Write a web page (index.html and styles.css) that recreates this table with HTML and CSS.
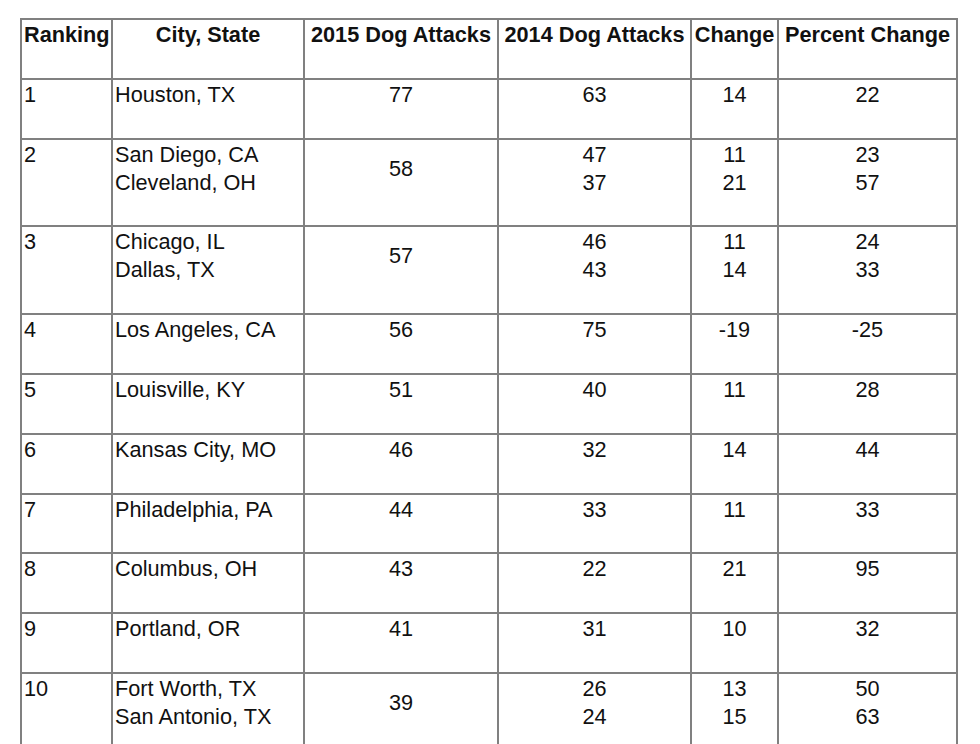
FILE: index.html
```html
<!DOCTYPE html>
<html lang="en">
<head>
<meta charset="utf-8">
<title>Dog Attacks by City</title>
<link rel="stylesheet" href="styles.css">
</head>
<body>
<table class="attacks">
  <colgroup>
    <col class="c-rank">
    <col class="c-city">
    <col class="c-2015">
    <col class="c-2014">
    <col class="c-change">
    <col class="c-pct">
  </colgroup>
  <thead>
    <tr>
      <th class="rank">Ranking</th>
      <th>City, State</th>
      <th>2015 Dog Attacks</th>
      <th>2014 Dog Attacks</th>
      <th>Change</th>
      <th>Percent Change</th>
    </tr>
  </thead>
  <tbody>
    <tr>
      <td class="rank">1</td>
      <td class="city">Houston, TX</td>
      <td>77</td>
      <td>63</td>
      <td>14</td>
      <td>22</td>
    </tr>
    <tr>
      <td class="rank">2</td>
      <td class="city">San Diego, CA<br>Cleveland, OH</td>
      <td>58</td>
      <td>47<br>37</td>
      <td>11<br>21</td>
      <td>23<br>57</td>
    </tr>
    <tr>
      <td class="rank">3</td>
      <td class="city">Chicago, IL<br>Dallas, TX</td>
      <td>57</td>
      <td>46<br>43</td>
      <td>11<br>14</td>
      <td>24<br>33</td>
    </tr>
    <tr>
      <td class="rank">4</td>
      <td class="city">Los Angeles, CA</td>
      <td>56</td>
      <td>75</td>
      <td>-19</td>
      <td>-25</td>
    </tr>
    <tr>
      <td class="rank">5</td>
      <td class="city">Louisville, KY</td>
      <td>51</td>
      <td>40</td>
      <td>11</td>
      <td>28</td>
    </tr>
    <tr>
      <td class="rank">6</td>
      <td class="city">Kansas City, MO</td>
      <td>46</td>
      <td>32</td>
      <td>14</td>
      <td>44</td>
    </tr>
    <tr>
      <td class="rank">7</td>
      <td class="city">Philadelphia, PA</td>
      <td>44</td>
      <td>33</td>
      <td>11</td>
      <td>33</td>
    </tr>
    <tr>
      <td class="rank">8</td>
      <td class="city">Columbus, OH</td>
      <td>43</td>
      <td>22</td>
      <td>21</td>
      <td>95</td>
    </tr>
    <tr>
      <td class="rank">9</td>
      <td class="city">Portland, OR</td>
      <td>41</td>
      <td>31</td>
      <td>10</td>
      <td>32</td>
    </tr>
    <tr>
      <td class="rank">10</td>
      <td class="city">Fort Worth, TX<br>San Antonio, TX</td>
      <td>39</td>
      <td>26<br>24</td>
      <td>13<br>15</td>
      <td>50<br>63</td>
    </tr>
  </tbody>
</table>
</body>
</html>
```

FILE: styles.css
```css
html, body {
  margin: 0;
  padding: 0;
  background: #ffffff;
}

body {
  padding: 18px 0 0 20px;
  font-family: "Liberation Sans", Arial, sans-serif;
  color: #111111;
}

.attacks {
  border-collapse: collapse;
  table-layout: fixed;
  width: 938px;
  font-size: 21.7px;
  line-height: 28px;
}

.c-rank { width: 91px; }
.c-city { width: 192px; }
.c-2015 { width: 194px; }
.c-2014 { width: 193px; }
.c-change { width: 87px; }
.c-pct { width: 179px; }

.attacks th,
.attacks td {
  border: 2px solid #808080;
  padding: 1px 2px 28.8px 2px;
  text-align: center;
  vertical-align: middle;
  white-space: nowrap;
}

.attacks th {
  font-weight: bold;
  vertical-align: top;
}

.attacks th.rank,
.attacks td.rank,
.attacks td.city {
  text-align: left;
  vertical-align: top;
}
```
